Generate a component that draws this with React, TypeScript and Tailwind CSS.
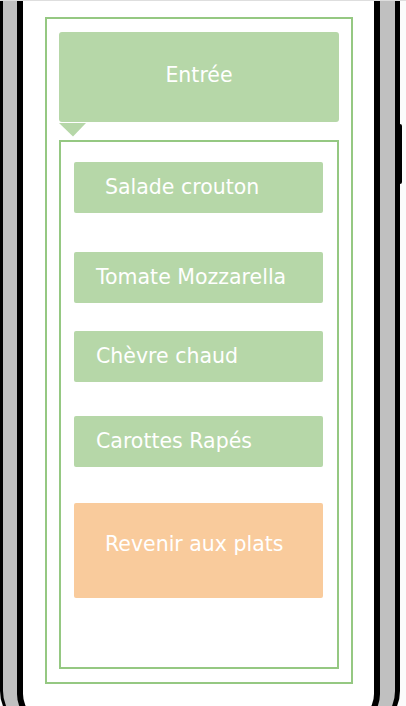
import React from "react";

const entrees = [
  { label: "Salade crouton", className: "mt-[20px] pl-[31px]" },
  { label: "Tomate Mozzarella", className: "mt-[39px] pl-[22px]" },
  { label: "Chèvre chaud", className: "mt-[28px] pl-[22px]" },
  { label: "Carottes Rapés", className: "mt-[34px] pl-[22px]" },
];

export default function App() {
  return (
    <div
      className="relative w-[406px] h-[706px] overflow-hidden bg-[#fbfbfb] border-t border-[#dedede]"
      style={{ fontFamily: '"DejaVu Sans", "Liberation Sans", sans-serif' }}
    >
      {/* phone body */}
      <div className="w-[400px] h-[730px] bg-[#c0c0c0] border-l-[3px] border-r-[5px] border-b-[3px] border-black rounded-b-[40px] px-[14px] pr-[15px] flex">
        <div className="flex-1 bg-white border-x-[6px] border-b-[6px] border-black rounded-b-[34px]">
          {/* outer frame */}
          <div className="ml-[22px] mt-[16px] w-[308px] h-[667px] border-2 border-[#95c882] px-[12px] pt-[13px]">
            <div className="h-[90px] rounded-[3px] bg-[#b6d7a8] flex items-center justify-center text-white text-[20.5px] pb-[3px]">
              Entrée
            </div>
            <div className="h-[18px] pt-[1px]">
              <svg width="27" height="14" viewBox="0 0 27 14">
                <path d="M0 0 L27 0 L14 13.5 Z" fill="#b6d7a8" />
              </svg>
            </div>
            {/* inner frame */}
            <div className="h-[529px] border-2 border-[#95c882] pl-[13px] pr-[14px]">
              {entrees.map((e) => (
                <div
                  key={e.label}
                  className={`h-[51px] rounded-[2px] bg-[#b6d7a8] flex items-center text-white text-[20.5px] ${e.className}`}
                >
                  {e.label}
                </div>
              ))}
              <div className="mt-[36px] h-[95px] rounded-[2px] bg-[#f9cb9c] flex items-center pl-[31px] pb-[12px] text-white text-[20.5px]">
                Revenir aux plats
              </div>
            </div>
          </div>
        </div>
      </div>
      {/* side button */}
      <div className="absolute left-[395px] top-[123px] w-[7px] h-[60px] bg-black rounded-r-[2px]" />
    </div>
  );
}
